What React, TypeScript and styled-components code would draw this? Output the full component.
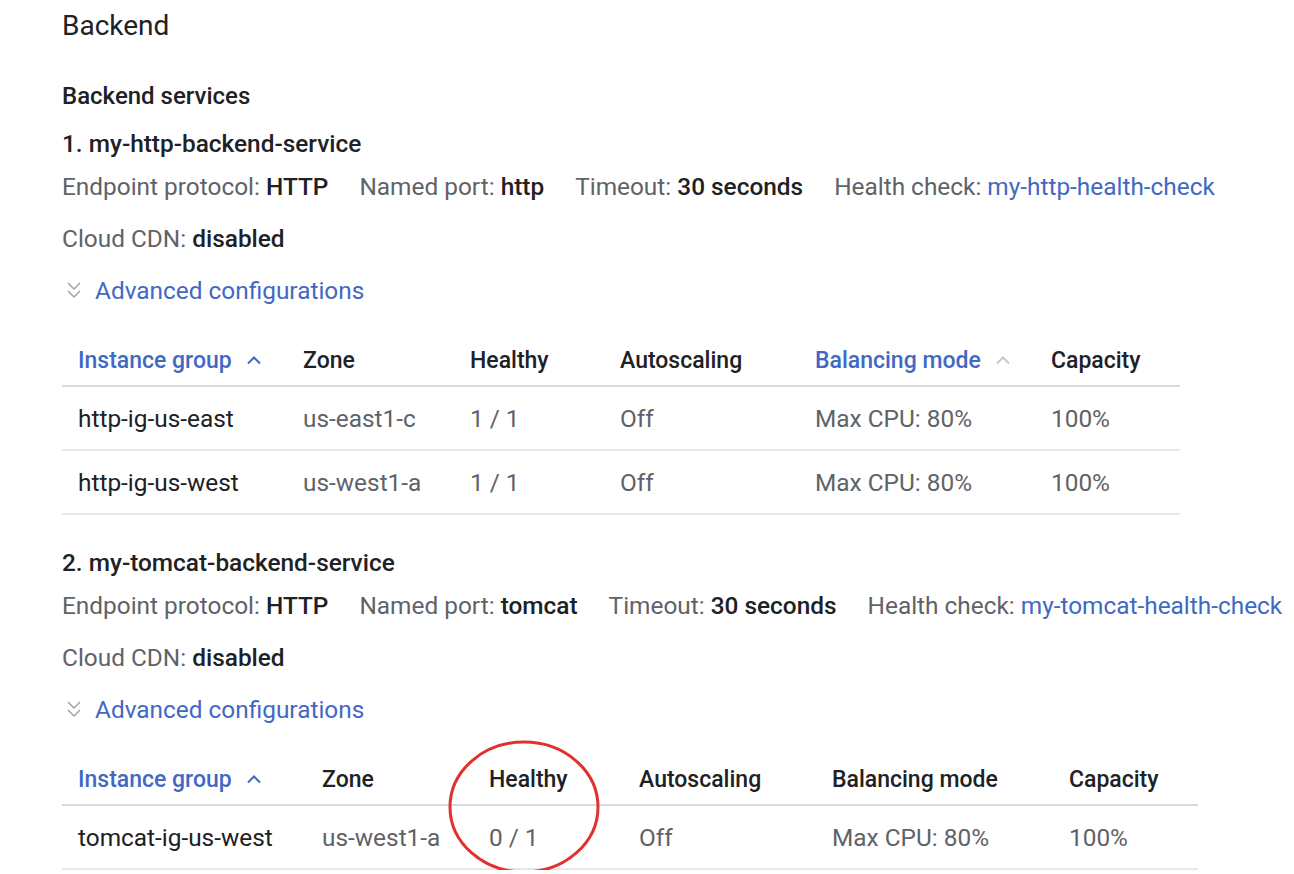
import * as React from 'react';
import styled, { createGlobalStyle } from 'styled-components';

const GlobalStyle = createGlobalStyle`
    html, body {
        margin: 0;
        padding: 0;
        background: #ffffff;
    }
    body {
        font-family: Roboto, 'Noto Sans', 'Liberation Sans', sans-serif;
        color: #212121;
        -webkit-font-smoothing: antialiased;
    }
`;

const colors = {
    TEXT: '#202124',
    LABEL: '#5f6368',
    BLUE: '#4169c2',
    ICON: '#9aa0a6',
    HEAD_LINE: '#d3dae2',
    ROW_LINE: '#e8e8e8',
    RED: '#e0322d',
};

const Page = styled.main`
    padding: 0 0 0 62px;
    width: 1232px;
    overflow: hidden;
`;

const PageTitle = styled.h1`
    margin: 0;
    font-size: 28px;
    font-weight: 400;
    line-height: 52px;
    color: ${colors.TEXT};
`;

const SectionTitle = styled.h2`
    margin: 28px 0 16px;
    font-size: 24px;
    font-weight: 500;
    line-height: 32px;
    color: ${colors.TEXT};
`;

const ServiceTitle = styled.h3`
    margin: 0;
    font-size: 24.4px;
    font-weight: 500;
    line-height: 32px;
    color: ${colors.TEXT};
`;

const Service = styled.section<{ $gap?: number }>`
    margin-top: ${p => p.$gap ?? 0}px;
`;

const InfoRow = styled.div`
    display: flex;
    gap: 31px;
    height: 52px;
    align-items: center;
    white-space: nowrap;
`;

const Field = styled.span`
    font-size: 24.4px;
    color: ${colors.LABEL};
`;

const Value = styled.b`
    font-weight: 500;
    color: ${colors.TEXT};
`;

const Link = styled.a`
    color: ${colors.BLUE};
    text-decoration: none;
`;

const Toggle = styled.div`
    display: flex;
    align-items: center;
    gap: 13px;
    height: 52px;
    padding-left: 4px;
    font-size: 24.4px;
    color: ${colors.BLUE};
`;

const TableWrap = styled.div<{ $width: number }>`
    position: relative;
    width: ${p => p.$width}px;
    margin-top: 19px;
`;

const Row = styled.div<{ $cols: string; $head?: boolean }>`
    display: grid;
    grid-template-columns: ${p => p.$cols};
    align-items: center;
    height: ${p => (p.$head ? 52 : 64)}px;
    border-bottom: 2px solid ${p => (p.$head ? colors.HEAD_LINE : colors.ROW_LINE)};
    box-sizing: border-box;
`;

const HeadCell = styled.div<{ $active?: boolean }>`
    display: flex;
    align-items: center;
    gap: 14px;
    padding-left: 16px;
    font-size: 23px;
    font-weight: 500;
    white-space: nowrap;
    color: ${p => (p.$active ? colors.BLUE : colors.TEXT)};
`;

const Cell = styled.div<{ $primary?: boolean }>`
    padding-left: 16px;
    font-size: 24.4px;
    white-space: nowrap;
    color: ${p => (p.$primary ? colors.TEXT : colors.LABEL)};
`;

const Circle = styled.svg`
    position: absolute;
    left: 384px;
    top: -15px;
    width: 156px;
    height: 136px;
    pointer-events: none;
`;

function SortArrow({ active }: { active?: boolean }) {
    return (
        <svg width="16" height="10" viewBox="0 0 16 10">
            <path
                d="M2 8.5 L8 2.5 L14 8.5"
                fill="none"
                stroke={active ? colors.BLUE : '#c4c7cc'}
                strokeWidth="2"
            />
        </svg>
    );
}

function ExpandIcon() {
    return (
        <svg width="16" height="20" viewBox="0 0 16 20">
            <path d="M2 3 L8 9 L14 3" fill="none" stroke={colors.ICON} strokeWidth="1.4" />
            <path d="M2 11 L8 17 L14 11" fill="none" stroke={colors.ICON} strokeWidth="1.4" />
        </svg>
    );
}

type Group = { name: string; zone: string; healthy: string };

type ServiceData = {
    title: string;
    port: string;
    check: string;
    cols: string;
    width: number;
    balancingSort: boolean;
    groups: Group[];
    circled?: boolean;
};

const services: ServiceData[] = [
    {
        title: '1. my-http-backend-service',
        port: 'http',
        check: 'my-http-health-check',
        cols: '225px 167px 150px 195px 236px 145px',
        width: 1118,
        balancingSort: true,
        groups: [
            { name: 'http-ig-us-east', zone: 'us-east1-c', healthy: '1 / 1' },
            { name: 'http-ig-us-west', zone: 'us-west1-a', healthy: '1 / 1' },
        ],
    },
    {
        title: '2. my-tomcat-backend-service',
        port: 'tomcat',
        check: 'my-tomcat-health-check',
        cols: '244px 167px 150px 193px 237px 145px',
        width: 1136,
        balancingSort: false,
        groups: [{ name: 'tomcat-ig-us-west', zone: 'us-west1-a', healthy: '0 / 1' }],
        circled: true,
    },
];

function BackendService({ data, gap }: { data: ServiceData; gap?: number }) {
    return (
        <Service $gap={gap}>
            <ServiceTitle>{data.title}</ServiceTitle>
            <InfoRow>
                <Field>
                    Endpoint protocol: <Value>HTTP</Value>
                </Field>
                <Field>
                    Named port: <Value>{data.port}</Value>
                </Field>
                <Field>
                    Timeout: <Value>30 seconds</Value>
                </Field>
                <Field>
                    Health check: <Link href="#">{data.check}</Link>
                </Field>
            </InfoRow>
            <InfoRow>
                <Field>
                    Cloud CDN: <Value>disabled</Value>
                </Field>
            </InfoRow>
            <Toggle>
                <ExpandIcon />
                Advanced configurations
            </Toggle>
            <TableWrap $width={data.width}>
                <Row $cols={data.cols} $head>
                    <HeadCell $active>
                        Instance group <SortArrow active />
                    </HeadCell>
                    <HeadCell>Zone</HeadCell>
                    <HeadCell>Healthy</HeadCell>
                    <HeadCell>Autoscaling</HeadCell>
                    <HeadCell $active={data.balancingSort}>
                        Balancing mode {data.balancingSort && <SortArrow />}
                    </HeadCell>
                    <HeadCell>Capacity</HeadCell>
                </Row>
                {data.groups.map(g => (
                    <Row $cols={data.cols} key={g.name}>
                        <Cell $primary>{g.name}</Cell>
                        <Cell>{g.zone}</Cell>
                        <Cell>{g.healthy}</Cell>
                        <Cell>Off</Cell>
                        <Cell>Max CPU: 80%</Cell>
                        <Cell>100%</Cell>
                    </Row>
                ))}
                {data.circled && (
                    <Circle viewBox="0 0 156 136">
                        <ellipse
                            cx="78"
                            cy="68"
                            rx="74"
                            ry="65"
                            fill="none"
                            stroke={colors.RED}
                            strokeWidth="3"
                        />
                    </Circle>
                )}
            </TableWrap>
        </Service>
    );
}

export default function App() {
    return (
        <Page>
            <GlobalStyle />
            <PageTitle>Backend</PageTitle>
            <SectionTitle>Backend services</SectionTitle>
            <BackendService data={services[0]} />
            <BackendService data={services[1]} gap={32} />
        </Page>
    );
}
